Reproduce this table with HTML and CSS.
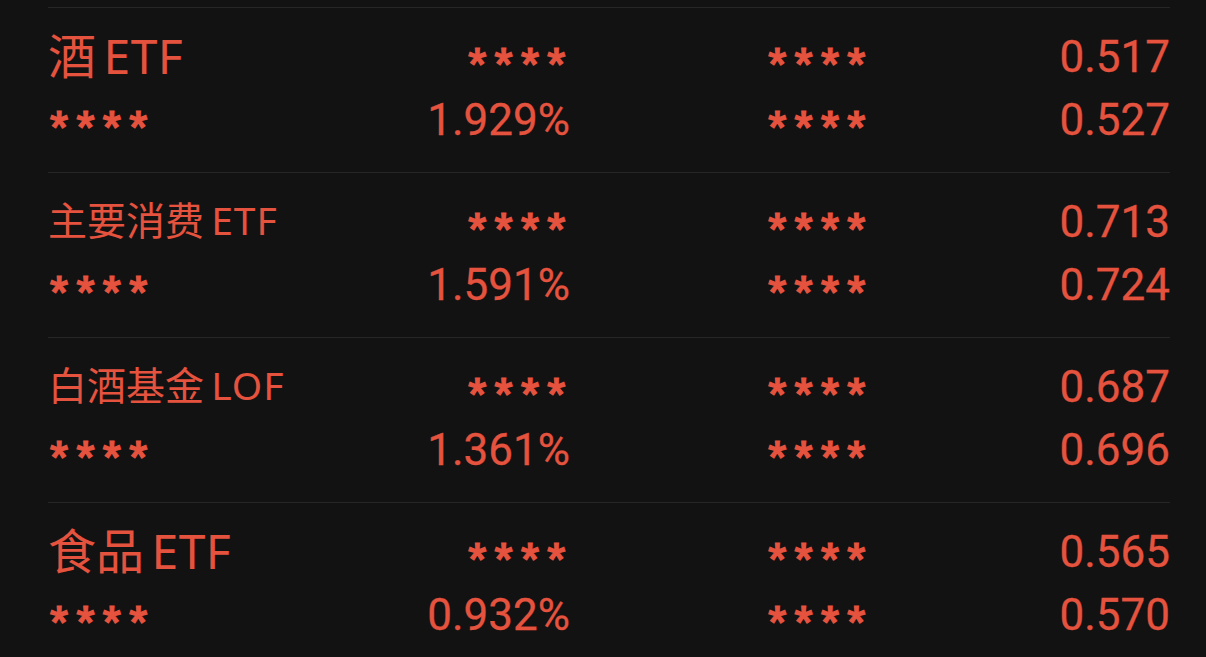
FILE: index.html
```html
<!DOCTYPE html>
<html lang="zh">
<head>
<meta charset="utf-8">
<link rel="stylesheet" href="styles.css">
</head>
<body>
<div class="list">
  <div class="item">
    <div class="name big">酒 <span class="latin">ETF</span></div>
    <div class="cell right"><span class="mask">****</span></div>
    <div class="cell right"><span class="mask">****</span></div>
    <div class="cell right num">0.517</div>
    <div class="cell"><span class="mask first">****</span></div>
    <div class="cell right num">1.929%</div>
    <div class="cell right"><span class="mask">****</span></div>
    <div class="cell right num">0.527</div>
  </div>
  <div class="item">
    <div class="name small">主要消费 <span class="latin">ETF</span></div>
    <div class="cell right"><span class="mask">****</span></div>
    <div class="cell right"><span class="mask">****</span></div>
    <div class="cell right num">0.713</div>
    <div class="cell"><span class="mask first">****</span></div>
    <div class="cell right num">1.591%</div>
    <div class="cell right"><span class="mask">****</span></div>
    <div class="cell right num">0.724</div>
  </div>
  <div class="item">
    <div class="name small">白酒基金 <span class="latin">LOF</span></div>
    <div class="cell right"><span class="mask">****</span></div>
    <div class="cell right"><span class="mask">****</span></div>
    <div class="cell right num">0.687</div>
    <div class="cell"><span class="mask first">****</span></div>
    <div class="cell right num">1.361%</div>
    <div class="cell right"><span class="mask">****</span></div>
    <div class="cell right num">0.696</div>
  </div>
  <div class="item">
    <div class="name big">食品 <span class="latin">ETF</span></div>
    <div class="cell right"><span class="mask">****</span></div>
    <div class="cell right"><span class="mask">****</span></div>
    <div class="cell right num">0.565</div>
    <div class="cell"><span class="mask first">****</span></div>
    <div class="cell right num">0.932%</div>
    <div class="cell right"><span class="mask">****</span></div>
    <div class="cell right num">0.570</div>
  </div>
</div>
</body>
</html>
```

FILE: styles.css
```css
html, body {
  margin: 0;
  padding: 0;
  background: #121212;
  overflow: hidden;
}
body {
  width: 1206px;
  height: 657px;
  color: #e5533f;
  font-family: Roboto, "Noto Sans", "Noto Sans CJK SC", sans-serif;
}
.list {
  padding: 7px 36px 0 48px;
}
.item {
  border-top: 1px solid #262626;
  padding: 18px 0 20px 0;
  display: grid;
  grid-template-columns: minmax(0, 1fr) 300px 300px 300px;
  grid-auto-rows: 63px;
  align-items: start;
  line-height: 63px;
}
.cell {
  font-size: 44px;
  white-space: nowrap;
}
.right {
  text-align: right;
}
.num {
  font-family: Roboto, sans-serif;
  -webkit-text-stroke: 0.3px #e5533f;
}
.name {
  font-family: "Noto Sans", "Noto Sans CJK SC", sans-serif;
  white-space: nowrap;
}
.name.big {
  font-size: 48px;
  line-height: 59px;
  word-spacing: -5px;
}
.name.big .latin {
  letter-spacing: 0.5px;
}
.name.small {
  font-size: 39px;
  line-height: 58px;
  word-spacing: -3px;
}
.name.small .latin {
  letter-spacing: 1px;
}
.mask {
  font-family: Roboto, sans-serif;
  font-weight: 900;
  font-size: 38px;
  letter-spacing: 8.7px;
  vertical-align: -4px;
  margin-right: -3.7px;
  -webkit-text-stroke: 1.2px #e5533f;
}
.mask.first {
  margin-left: 2px;
}
```
